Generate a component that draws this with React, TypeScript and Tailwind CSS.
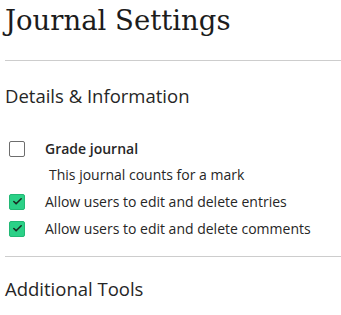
import { Check } from "lucide-react";

const options = [
  { id: "grade", label: "Grade journal", hint: "This journal counts for a mark", checked: false, bold: true },
  { id: "entries", label: "Allow users to edit and delete entries", checked: true },
  { id: "comments", label: "Allow users to edit and delete comments", checked: true },
];

export default function App() {
  return (
    <div className="w-[341px] h-[315px] bg-white pl-[5px] overflow-hidden font-['Open_Sans',sans-serif] text-[#262626]">
      <h1 className="font-['DejaVu_Serif',serif] text-[27.5px] leading-[38px] text-[#1c1c1c] pt-[1px]">
        Journal Settings
      </h1>
      <div className="mt-[21px] border-t border-[#cdcdcd]"></div>

      <h2 className="mt-[23px] text-[18.5px] leading-[24px] text-[#262626]">Details &amp; Information</h2>

      <div className="mt-[27px] flex flex-col">
        {options.map((o) => (
          <div key={o.id} className="flex flex-col">
            <label className="flex items-center h-[27px]">
              {o.checked ? (
                <span className="ml-[4px] w-[16px] h-[16px] rounded-[2px] bg-[#2bd187] border border-[#22b875] flex items-center justify-center">
                  <Check size={11} strokeWidth={3.5} className="text-[#1a2b22]" />
                </span>
              ) : (
                <span className="ml-[4px] w-[16px] h-[16px] rounded-[2px] border border-[#6d6d6d] bg-white"></span>
              )}
              <span className={`ml-[20px] text-[14px] ${o.bold ? "font-semibold" : ""} text-[#262626]`}>{o.label}</span>
            </label>
            {o.hint && <p className="ml-[44px] mt-[3px] text-[14px] leading-[20px] text-[#262626] mb-[3px]">{o.hint}</p>}
          </div>
        ))}
      </div>

      <div className="mt-[14px] border-t border-[#cdcdcd]"></div>
      <h2 className="mt-[20px] text-[18.5px] leading-[24px] text-[#262626]">Additional Tools</h2>
    </div>
  );
}
